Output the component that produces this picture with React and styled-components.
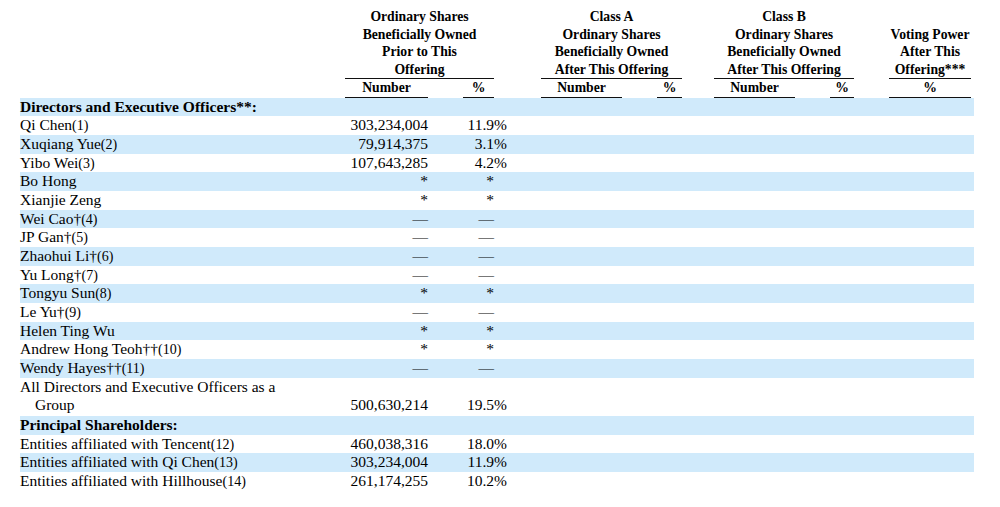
import React from 'react';
import styled, { createGlobalStyle } from 'styled-components';

const Global = createGlobalStyle`
  html, body { margin: 0; padding: 0; background: #fff; }
  body {
    font-family: "Liberation Serif", "Times New Roman", serif;
    color: #000;
  }
`;

const Page = styled.div`
  padding: 8px 0 0 20px;
`;

const Table = styled.table`
  table-layout: fixed;
  width: 954px;
  border-collapse: separate;
  border-spacing: 0;
`;

const COLS = [325, 83, 35, 31, 13, 34, 81, 35, 25, 32, 81, 35, 24, 35, 82, 3];

const HeadCell = styled.th`
  padding: 0;
  font-size: 13.7px;
  line-height: 17.5px;
  font-weight: bold;
  text-align: center;
  vertical-align: bottom;
  white-space: nowrap;
  border-bottom: ${(p) => (p.$rule ? '1px solid #111' : '1px solid transparent')};
`;

const Row = styled.tr`
  background: ${(p) => (p.$band ? '#d0eafb' : 'transparent')};
`;

const Cell = styled.td`
  padding: 0 0 ${(p) => (p.$tall ? '1px' : '0')} 0;
  height: 18.67px;
  font-size: 15.5px;
  line-height: 18.67px;
  white-space: nowrap;
  vertical-align: bottom;
  overflow: visible;
  text-align: ${(p) => p.$align || 'left'};
  font-weight: ${(p) => (p.$bold ? 'bold' : 'normal')};
`;

const Ref = styled.span`
  font-size: 14px;
  line-height: 0;
`;

const Indent = styled.span`
  padding-left: 15px;
`;

const rows = [
  { section: 'Directors and Executive Officers**:' },
  { name: 'Qi Chen', ref: '(1)', num: '303,234,004', pct: '11.9' },
  { name: 'Xuqiang Yue', ref: '(2)', num: '79,914,375', pct: '3.1' },
  { name: 'Yibo Wei', ref: '(3)', num: '107,643,285', pct: '4.2' },
  { name: 'Bo Hong', num: '*', pct: '*' },
  { name: 'Xianjie Zeng', num: '*', pct: '*' },
  { name: 'Wei Cao†', ref: '(4)', num: '—', pct: '—' },
  { name: 'JP Gan†', ref: '(5)', num: '—', pct: '—' },
  { name: 'Zhaohui Li†', ref: '(6)', num: '—', pct: '—' },
  { name: 'Yu Long†', ref: '(7)', num: '—', pct: '—' },
  { name: 'Tongyu Sun', ref: '(8)', num: '*', pct: '*' },
  { name: 'Le Yu†', ref: '(9)', num: '—', pct: '—' },
  { name: 'Helen Ting Wu', num: '*', pct: '*' },
  { name: 'Andrew Hong Teoh††', ref: '(10)', num: '*', pct: '*' },
  { name: 'Wendy Hayes††', ref: '(11)', num: '—', pct: '—' },
  { name: 'All Directors and Executive Officers as a', second: 'Group', num: '500,630,214', pct: '19.5' },
  { section: 'Principal Shareholders:' },
  { name: 'Entities affiliated with Tencent', ref: '(12)', num: '460,038,316', pct: '18.0' },
  { name: 'Entities affiliated with Qi Chen', ref: '(13)', num: '303,234,004', pct: '11.9' },
  { name: 'Entities affiliated with Hillhouse', ref: '(14)', num: '261,174,255', pct: '10.2' },
];

const isNumeric = (v) => /\d/.test(v);

function DataRow({ row, band }) {
  if (row.section) {
    return (
      <Row $band={band}>
        <Cell $bold colSpan={16}>{row.section}</Cell>
      </Row>
    );
  }
  const tall = !!row.second;
  return (
    <Row $band={band}>
      <Cell $tall={tall}>
        {row.name}
        {row.ref && <Ref>{row.ref}</Ref>}
        {row.second && (
          <>
            <br />
            <Indent>{row.second}</Indent>
          </>
        )}
      </Cell>
      <Cell $tall={tall} $align="right">{row.num}</Cell>
      <Cell $tall={tall} />
      <Cell $tall={tall} $align="right">{row.pct}</Cell>
      <Cell $tall={tall}>{isNumeric(row.pct) ? '%' : ''}</Cell>
      <Cell $tall={tall} colSpan={11} />
    </Row>
  );
}

export default function App() {
  return (
    <>
      <Global />
      <Page>
        <Table>
          <colgroup>
            {COLS.map((w, i) => (
              <col key={i} style={{ width: w }} />
            ))}
          </colgroup>
          <thead>
            <tr>
              <HeadCell />
              <HeadCell colSpan={3} $rule>
                Ordinary Shares
                <br />
                Beneficially Owned
                <br />
                Prior to This
                <br />
                Offering
              </HeadCell>
              <HeadCell colSpan={2} />
              <HeadCell colSpan={3} $rule>
                Class A
                <br />
                Ordinary Shares
                <br />
                Beneficially Owned
                <br />
                After This Offering
              </HeadCell>
              <HeadCell />
              <HeadCell colSpan={3} $rule>
                Class B
                <br />
                Ordinary Shares
                <br />
                Beneficially Owned
                <br />
                After This Offering
              </HeadCell>
              <HeadCell />
              <HeadCell $rule>
                Voting Power
                <br />
                After This
                <br />
                Offering***
              </HeadCell>
              <HeadCell />
            </tr>
            <tr>
              <HeadCell />
              <HeadCell $rule>Number</HeadCell>
              <HeadCell />
              <HeadCell $rule>%</HeadCell>
              <HeadCell colSpan={2} />
              <HeadCell $rule>Number</HeadCell>
              <HeadCell />
              <HeadCell $rule>%</HeadCell>
              <HeadCell />
              <HeadCell $rule>Number</HeadCell>
              <HeadCell />
              <HeadCell $rule>%</HeadCell>
              <HeadCell />
              <HeadCell $rule>%</HeadCell>
              <HeadCell />
            </tr>
          </thead>
          <tbody>
            {rows.map((r, i) => (
              <DataRow key={i} row={r} band={i % 2 === 0} />
            ))}
          </tbody>
        </Table>
      </Page>
    </>
  );
}
